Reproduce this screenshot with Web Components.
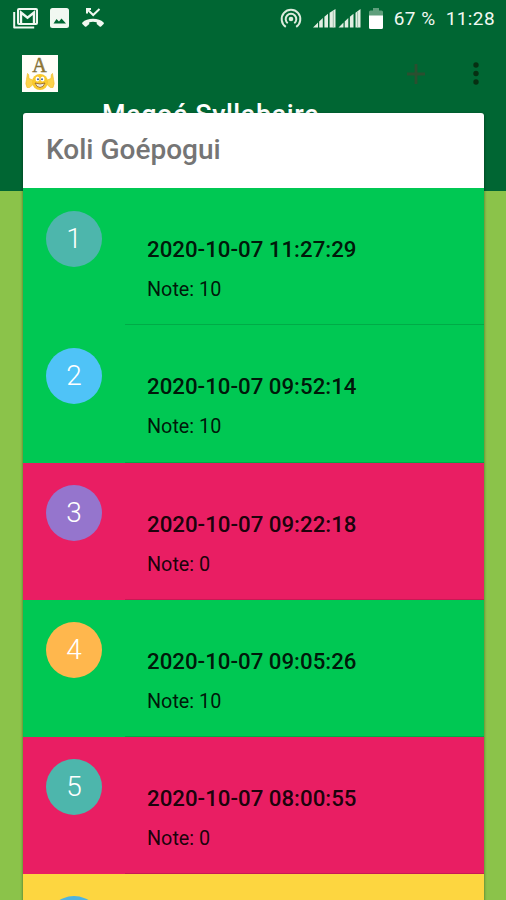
<!DOCTYPE html>
<html lang="fr">
<head>
<meta charset="utf-8">
<title>Magoé Syllabaire</title>
<style>
  body {
    margin: 0;
    height: 900px;
    overflow: hidden;
    background: #8bc34a;
    font-family: Roboto, "Liberation Sans", sans-serif;
  }
</style>
</head>
<body>
<score-screen>
  <status-bar slot="status" battery="67 %" time="11:28"></status-bar>
  <app-bar slot="bar">Magoé Syllabaire</app-bar>
  <score-card>
    <span slot="name">Koli Goépogui</span>
    <score-row number="1" color="#4db6ac" result="good" date="2020-10-07 11:27:29" note="10"></score-row>
    <score-row number="2" color="#4fc3f7" result="good" date="2020-10-07 09:52:14" note="10"></score-row>
    <score-row number="3" color="#9575cd" result="bad" date="2020-10-07 09:22:18" note="0"></score-row>
    <score-row number="4" color="#ffb74d" result="good" date="2020-10-07 09:05:26" note="10"></score-row>
    <score-row number="5" color="#4db6ac" result="bad" date="2020-10-07 08:00:55" note="0"></score-row>
    <score-row color="#4fb3e0" result="average"></score-row>
  </score-card>
</score-screen>

<script>
class ScoreScreen extends HTMLElement {
  constructor() {
    super();
    this.attachShadow({ mode: "open" });
  }

  connectedCallback() {
    this.shadowRoot.innerHTML = `
      <style>
        :host {
          display: block;
          width: 506px;
          height: 900px;
          overflow: hidden;
        }
        header {
          height: 191px;
          background: #006633;
        }
        main {
          margin: -78px 22px 0 23px;
          position: relative;
        }
      </style>
      <header>
        <slot name="status"></slot>
        <slot name="bar"></slot>
      </header>
      <main><slot></slot></main>
    `;
  }
}

class StatusBar extends HTMLElement {
  constructor() {
    super();
    this.attachShadow({ mode: "open" });
  }

  connectedCallback() {
    this.shadowRoot.innerHTML = `
      <style>
        :host {
          display: flex;
          justify-content: space-between;
          align-items: center;
          height: 36px;
          padding: 0 11px 0 13px;
          box-sizing: border-box;
          color: #f1f8f1;
          font-size: 19px;
          font-weight: 400;
        }
        div { display: flex; align-items: center; }
        svg { display: block; }
        .left { gap: 12px; }
        .signal { margin-left: 11px; }
        .battery { margin-left: 6px; }
        .percent { margin-left: 11px; letter-spacing: 0.5px; white-space: nowrap; }
        .time { margin-left: 10px; letter-spacing: 0.4px; }
      </style>
      <div class="left">
        <!-- mail -->
        <svg width="25" height="21" viewBox="0 0 25 21" fill="none">
          <path d="M1.200 4v15.500h20" stroke="#f1f8f1" stroke-width="2" stroke-linejoin="round"/>
          <rect x="5" y="1" width="19" height="15" rx="1" stroke="#f1f8f1" stroke-width="2"/>
          <path d="M8 15V4.500l6.500 5.200L21 4.500V15" stroke="#f1f8f1" stroke-width="2.400"/>
        </svg>
        <!-- picture -->
        <svg width="19" height="20" viewBox="0 0 19 20">
          <rect width="19" height="20" rx="2.500" fill="#f1f8f1"/>
          <path d="M3.500 15.500l3-4.500 2.500 2.500 2.500-3 4.500 5z" fill="#006633"/>
        </svg>
        <!-- missed call -->
        <svg width="24" height="20" viewBox="0 0 24 20" fill="none">
          <path d="M6 5.500V1H10M6 1l6.200 6L18.500 1" stroke="#f1f8f1" stroke-width="2"/>
          <path d="M12 10.800c-4.500 0-8.100 1.300-10.600 3.600-.5.500-.5 1 0 1.500l2.500 2.600c.5.400 1 .4 1.500 0l2.300-1.900c.4-.3.600-.7.600-1.200v-1.200c2.400-.7 5-.7 7.400 0v1.200c0 .5.200.9.600 1.200l2.300 1.900c.5.400 1 .4 1.500 0l2.500-2.600c.5-.5.500-1 0-1.500-2.500-2.300-6.100-3.600-10.600-3.600z" fill="#f1f8f1"/>
        </svg>
      </div>
      <div>
        <!-- hotspot -->
        <svg width="22" height="20" viewBox="0 0 22 20" fill="none" stroke="#dcebdc" stroke-width="2">
          <circle cx="11" cy="11" r="2.300" fill="#dcebdc" stroke="none"/>
          <path d="M7.700 15.200a5.300 5.300 0 1 1 6.600 0"/>
          <path d="M5.800 18.800a9.300 9.300 0 1 1 10.400 0"/>
        </svg>
        <svg class="signal" width="50" height="19" viewBox="0 0 50 19" fill="#e3eee3">
          <path d="M0 18.500l5-5v5zM6.200 12.500l3.600-3.400v9.400H6.200zM11.400 7.800l3.600-3v13.700h-3.600zM16.600 3.700L22.500 0v18.500h-5.900z"/>
          <path d="M25.500 18.500l5-5v5zM31.700 12.500l3.600-3.400v9.400h-3.600zM36.900 7.800l3.600-3v13.700h-3.600zM42.500 3.700L47.500 0v18.500h-5z"/>
          <path d="M20.300 1.500v17M44.600 2.500v16" stroke="#8ab39a" stroke-width=".8"/>
        </svg>
        <svg class="battery" width="14" height="21" viewBox="0 0 14 21">
          <path d="M4 0h6v2.500h2.500a1.500 1.500 0 0 1 1.500 1.500v4H0V4a1.500 1.500 0 0 1 1.500-1.500H4z" fill="#5f9f7c"/>
          <path d="M0 7.500h14v12a1.500 1.500 0 0 1-1.500 1.500h-11A1.500 1.500 0 0 1 0 19.500z" fill="#fff"/>
        </svg>
        <span class="percent">${this.getAttribute("battery")}</span>
        <span class="time">${this.getAttribute("time")}</span>
      </div>
    `;
  }
}

class AppBar extends HTMLElement {
  constructor() {
    super();
    this.attachShadow({ mode: "open" });
  }

  connectedCallback() {
    this.shadowRoot.innerHTML = `
      <style>
        :host { display: block; }
        .tools {
          display: flex;
          align-items: center;
          height: 58px;
          padding: 17px 27px 0 22px;
          box-sizing: border-box;
        }
        svg { display: block; }
        .logo { margin-right: auto; }
        .more { margin-left: 48px; }
        .title {
          margin-left: 102px;
          padding-top: 5px;
          color: #fff;
          font-size: 27px;
          font-weight: 500;
          line-height: 32px;
          letter-spacing: 0.55px;
          white-space: nowrap;
        }
      </style>
      <div class="tools">
        <!-- letter above a smiley with two thumbs up -->
        <svg class="logo" width="36" height="37" viewBox="0 0 36 37">
          <rect width="36" height="37" fill="#fffef8"/>
          <text x="17.500" y="17" text-anchor="middle" font-family="Liberation Serif, serif" font-size="20" fill="#9a7a2c" stroke="#6d6338" stroke-width=".4">A</text>
          <path d="M5.500 18.500q1.500 0 1.500 5l3.500 1.500v5l-3 2.500H5q-2-4-.5-8zM30.500 18.500q-1.500 0-1.500 5l-3.500 1.500v5l3 2.500H31q2-4 .5-8z" fill="#fbd24b" stroke="#f0bd2c" stroke-width=".7" stroke-linejoin="round"/>
          <circle cx="18" cy="27" r="8" fill="#f9c92e"/>
          <ellipse cx="15.500" cy="24" rx="2" ry="2.600" fill="#fff"/>
          <ellipse cx="20.500" cy="24" rx="2" ry="2.600" fill="#fff"/>
          <circle cx="16" cy="24.300" r="1" fill="#45639b"/>
          <circle cx="20" cy="24.300" r="1" fill="#45639b"/>
          <path d="M13 28q5 2 10 0-1.500 4.500-5 4.500t-5-4.500z" fill="#eee9df" stroke="#95621b" stroke-width=".8"/>
        </svg>
        <svg width="18" height="20" viewBox="0 0 18 20">
          <path d="M9 0v20M0 10h18" stroke="#2b4f30" stroke-width="2.800"/>
        </svg>
        <svg class="more" width="6" height="23" viewBox="0 0 6 23" fill="#062f12">
          <circle cx="3" cy="3" r="2.700"/>
          <circle cx="3" cy="11.500" r="2.700"/>
          <circle cx="3" cy="20" r="2.700"/>
        </svg>
      </div>
      <div class="title"><slot></slot></div>
    `;
  }
}

class ScoreCard extends HTMLElement {
  constructor() {
    super();
    this.attachShadow({ mode: "open" });
  }

  connectedCallback() {
    this.shadowRoot.innerHTML = `
      <style>
        :host {
          display: block;
          border-radius: 3px 3px 0 0;
          overflow: hidden;
          background: #fff;
          box-shadow: 0 1px 3px rgba(0, 0, 0, 0.5);
        }
        .name {
          height: 75.400px;
          padding: 0 23px;
          box-sizing: border-box;
          color: #757575;
          font-size: 28px;
          font-weight: 500;
          line-height: 73px;
          white-space: nowrap;
        }
      </style>
      <div class="name"><slot name="name"></slot></div>
      <slot></slot>
    `;
  }
}

class ScoreRow extends HTMLElement {
  constructor() {
    super();
    this.attachShadow({ mode: "open" });
  }

  connectedCallback() {
    const backgrounds = { good: "#00c853", bad: "#e91e63", average: "#fdd640" };
    const number = this.getAttribute("number") || "";
    const date = this.getAttribute("date") || "";
    const note = this.getAttribute("note");

    this.shadowRoot.innerHTML = `
      <style>
        :host {
          display: flex;
          height: 137.1px;
          padding-left: 23px;
          box-sizing: border-box;
          background: ${backgrounds[this.getAttribute("result")]};
        }
        .badge {
          width: 56px;
          height: 56px;
          margin: 22.500px 23px 0 0;
          border-radius: 50%;
          background: ${this.getAttribute("color")};
          color: #fff;
          font-size: 28px;
          font-weight: 300;
          line-height: 56px;
          text-align: center;
        }
        .text {
          flex: 1;
          padding: 46px 0 0 22px;
          border-bottom: 1px solid rgba(0, 0, 0, 0.14);
          color: rgba(0, 0, 0, 0.9);
          white-space: nowrap;
        }
        .date {
          font-size: 22.250px;
          font-weight: 500;
          line-height: 30px;
        }
        .note {
          margin-top: 11px;
          font-size: 19.800px;
          line-height: 29px;
        }
      </style>
      <div class="badge">${number}</div>
      <div class="text">
        <div class="date">${date}</div>
        <div class="note">${note === null ? "" : `Note: ${note}`}</div>
      </div>
    `;
  }
}

customElements.define("score-screen", ScoreScreen);
customElements.define("status-bar", StatusBar);
customElements.define("app-bar", AppBar);
customElements.define("score-card", ScoreCard);
customElements.define("score-row", ScoreRow);
</script>
</body>
</html>
